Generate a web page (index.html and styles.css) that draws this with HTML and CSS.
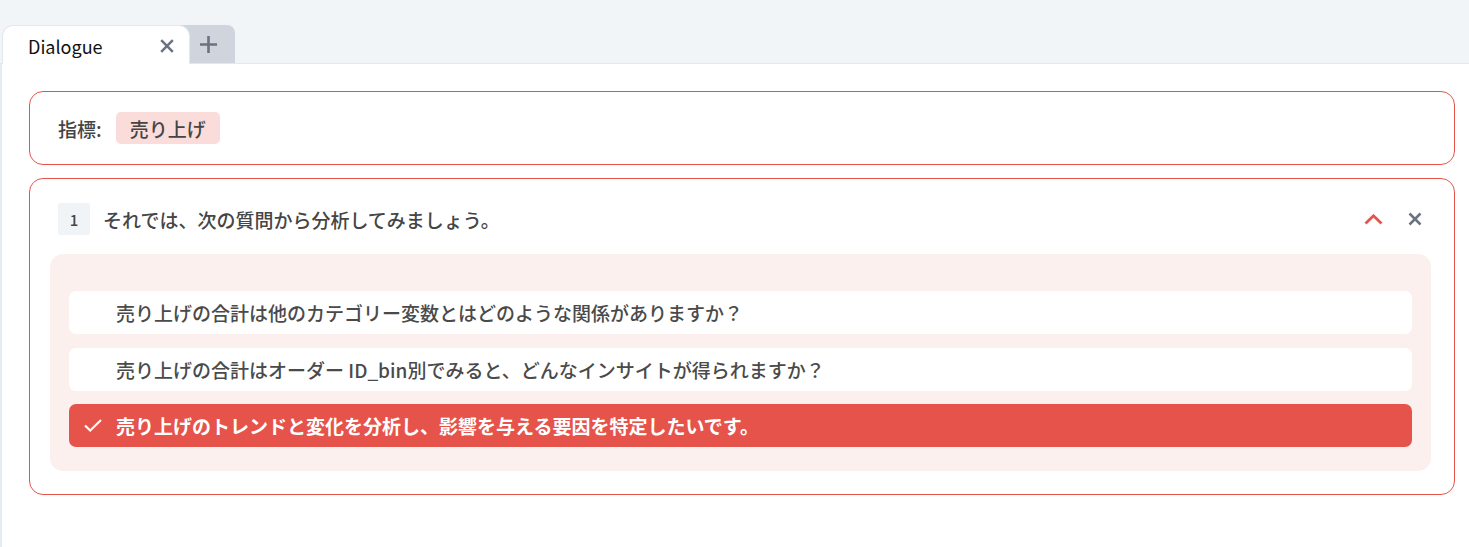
FILE: index.html
```html
<!DOCTYPE html>
<html lang="ja">
<head>
<meta charset="utf-8">
<link rel="stylesheet" href="styles.css">
</head>
<body>
<div class="tabbar">
  <div class="tab">
    <span class="tab-title">Dialogue</span>
    <svg class="tab-close" width="14" height="14" viewBox="0 0 14 14"><path d="M1.2 1.2L12.8 12.8M12.8 1.2L1.2 12.8" stroke="#6b7280" stroke-width="2.5"/></svg>
  </div>
  <div class="tab-add">
    <svg width="17" height="17" viewBox="0 0 17 17"><path d="M8.5 0V17M0 8.5H17" stroke="#6b7280" stroke-width="2.6"/></svg>
  </div>
</div>
<main class="main">
  <section class="card metric">
    <span class="metric-label">指標:</span>
    <span class="badge">売り上げ</span>
  </section>
  <section class="card question">
    <div class="q-head">
      <span class="q-num">1</span>
      <span class="q-title">それでは、次の質問から分析してみましょう。</span>
      <div class="q-actions">
        <svg width="19" height="11" viewBox="0 0 19 11"><path d="M1.5 9.5L9.5 1.8L17.5 9.5" fill="none" stroke="#e5534b" stroke-width="2.8"/></svg>
        <svg width="14" height="14" viewBox="0 0 14 14"><path d="M1.5 1.5L12.5 12.5M12.5 1.5L1.5 12.5" stroke="#6b7280" stroke-width="2.5"/></svg>
      </div>
    </div>
    <div class="panel">
      <div class="option"><span class="check"></span><span>売り上げの合計は他のカテゴリー変数とはどのような関係がありますか？</span></div>
      <div class="option"><span class="check"></span><span>売り上げの合計はオーダー ID_bin別でみると、どんなインサイトが得られますか？</span></div>
      <div class="option selected"><span class="check"><svg width="18" height="13" viewBox="0 0 18 13"><path d="M1 6.5L6.2 11.5L17 1" fill="none" stroke="#fff" stroke-width="2.1"/></svg></span><span>売り上げのトレンドと変化を分析し、影響を与える要因を特定したいです。</span></div>
    </div>
  </section>
</main>
</body>
</html>
```
FILE: styles.css
```css
* { box-sizing: border-box; }
html, body { margin: 0; height: 100%; }
body {
  background: #f2f5f8;
  font-family: "Noto Sans CJK JP", "Noto Sans", sans-serif;
  color: #454545;
  display: flex;
  flex-direction: column;
}
.tabbar {
  height: 64px;
  padding: 25px 0 0 2px;
  display: flex;
  align-items: stretch;
  border-bottom: 1px solid #e3e8ee;
}
.tab {
  width: 188px;
  background: #fff;
  border: 1px solid #e3e8ee;
  border-bottom: none;
  border-radius: 11px 11px 0 0;
  display: flex;
  align-items: center;
  padding: 0 15px 0 25px;
  margin-bottom: -1px;
  position: relative;
  z-index: 1;
}
.tab-title {
  flex: 1;
  font-size: 18px;
  color: #111;
  padding-top: 1px;
}
.tab-close { margin-top: 1px; }
.tab-add {
  width: 58px;
  background: #cfd4dd;
  border-radius: 0 8px 0 0;
  display: flex;
  align-items: center;
  justify-content: center;
  margin-left: -13px;
  padding-left: 4px;
}
.main {
  flex: 1;
  background: #fff;
  border-left: 2px solid #e6ebf0;
  padding: 27px 14px 0 27px;
  display: flex;
  flex-direction: column;
  gap: 13px;
}
.card {
  border: 1px solid #e5534b;
  border-radius: 14px;
}
.metric {
  height: 74px;
  display: flex;
  align-items: center;
  padding: 0 28px;
  gap: 14px;
}
.metric-label { font-size: 19px; font-weight: 500; }
.badge {
  background: #fadcdb;
  border-radius: 5px;
  height: 32px;
  padding: 0 14px;
  display: flex;
  align-items: center;
  font-size: 19px;
  font-weight: 500;
}
.question {
  padding: 24px 23px 23px 20px;
}
.q-head {
  display: flex;
  align-items: center;
  height: 32px;
  padding: 0 8px 0 8px;
  gap: 13px;
}
.q-num {
  width: 32px;
  height: 32px;
  background: #f1f4f7;
  border-radius: 2px;
  display: flex;
  align-items: center;
  justify-content: center;
  font-size: 15px;
  font-weight: 500;
}
.q-title { flex: 1; font-size: 19px; font-weight: 500; }
.q-actions {
  display: flex;
  align-items: center;
  gap: 25px;
  margin-right: 1px;
}
.panel {
  margin-top: 19px;
  background: #fcf0ef;
  border-radius: 13px;
  padding: 37px 19px 24px 19px;
  display: flex;
  flex-direction: column;
  gap: 13.5px;
}
.option {
  height: 43px;
  background: #fff;
  border-radius: 7px;
  display: flex;
  align-items: center;
  padding-left: 15px;
  font-size: 19px;
  font-weight: 500;
  color: #4a4a4a;
}
.check {
  width: 32px;
  display: flex;
  align-items: center;
}
.option.selected {
  background: #e6534a;
  color: #fff;
  font-weight: 700;
}
```
